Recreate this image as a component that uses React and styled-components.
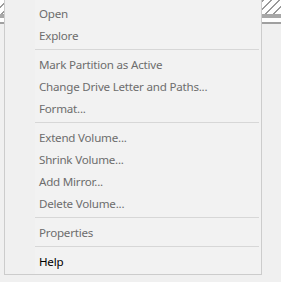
import React from "react";
import styled, { createGlobalStyle } from "styled-components";

const Global = createGlobalStyle`
  html, body { margin: 0; padding: 0; background: #f0f0f0; }
  body { width: 281px; height: 282px; overflow: hidden; }
  #root { width: 281px; height: 282px; }
`;

const Page = styled.div`
  position: relative;
  width: 281px;
  height: 282px;
  background: #f0f0f0;
  display: flex;
  flex-direction: column;
`;

const Hatch = styled.div`
  height: 14px;
  flex-shrink: 0;
  background-color: #ffffff;
  background-image: repeating-linear-gradient(
    135deg,
    #ffffff 0px,
    #ffffff 4.6px,
    #9a9a9a 4.6px,
    #9a9a9a 5.66px
  );
`;

const Bar = styled.div`
  flex-shrink: 0;
  height: ${(p) => p.$h}px;
  background: ${(p) => p.$c};
`;

const Menu = styled.div`
  position: absolute;
  left: 4px;
  top: 0;
  width: 258px;
  box-sizing: border-box;
  border: 1px solid #cccccc;
  border-top: none;
  padding: 2px 2px 2px 0;
  background: linear-gradient(to right, #f0f0f0 0, #f0f0f0 30px, #f2f2f2 30px);
  display: flex;
  flex-direction: column;
  font-family: "Noto Sans", "Open Sans", sans-serif;
  font-size: 11.6px;
`;

const Item = styled.div`
  flex-shrink: 0;
  height: 22px;
  line-height: 23px;
  padding-left: 34px;
  color: ${(p) => (p.$enabled ? "#000000" : "#6d6d6d")};
  white-space: nowrap;
  letter-spacing: -0.22px;
`;

const Separator = styled.div`
  flex-shrink: 0;
  height: 7px;
  display: flex;
  align-items: center;
  padding-left: 30px;
  &::after {
    content: "";
    flex: 1;
    height: 1px;
    background: #d7d7d7;
  }
`;

const groups = [
  ["Open", "Explore"],
  ["Mark Partition as Active", "Change Drive Letter and Paths...", "Format..."],
  ["Extend Volume...", "Shrink Volume...", "Add Mirror...", "Delete Volume..."],
  ["Properties"],
];

export default function App() {
  return (
    <Page>
      <Global />
      <Hatch />
      <Bar $h={4} $c="#a8a8a8" />
      <Bar $h={4} $c="#ffffff" />
      <Bar $h={2} $c="#a0a0a0" />
      <Menu>
        {groups.map((g, i) => (
          <React.Fragment key={i}>
            {g.map((t) => (
              <Item key={t}>{t}</Item>
            ))}
            <Separator />
          </React.Fragment>
        ))}
        <Item $enabled>Help</Item>
      </Menu>
    </Page>
  );
}
